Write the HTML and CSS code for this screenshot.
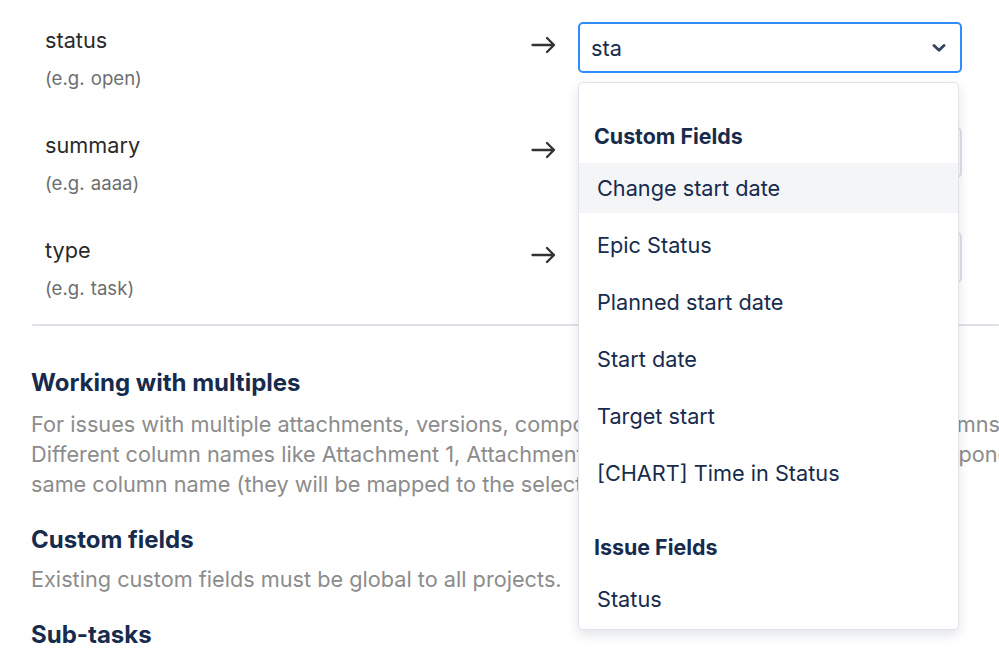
FILE: index.html
```html
<!DOCTYPE html>
<html lang="en">
<head>
<meta charset="utf-8">
<title>Field mapping</title>
<link rel="stylesheet" href="styles.css">
</head>
<body>
<div class="page">
  <div class="mapping">
    <div class="map-row">
      <div class="source">
        <div class="source-name">status</div>
        <div class="source-hint">(e.g. open)</div>
      </div>
      <div class="arrow">
        <svg width="26" height="20" viewBox="0 0 26 20"><path d="M1.5 10H23M16 3L23 10L16 17" fill="none" stroke="#333" stroke-width="2.3" stroke-linecap="round" stroke-linejoin="round"/></svg>
      </div>
      <div class="select-wrap">
        <div class="select select-focused">
          <span class="select-value">sta</span>
          <svg class="chevron" width="14" height="10" viewBox="0 0 14 10"><path d="M2 2.5L7 7.2L12 2.5" fill="none" stroke="#344563" stroke-width="2.9" stroke-linecap="round" stroke-linejoin="round"/></svg>
        </div>
        <div class="menu">
          <div class="group">
            <div class="group-heading">Custom Fields</div>
            <div class="options">
              <div class="option option-active">Change start date</div>
              <div class="option">Epic Status</div>
              <div class="option">Planned start date</div>
              <div class="option">Start date</div>
              <div class="option">Target start</div>
              <div class="option">[CHART] Time in Status</div>
            </div>
          </div>
          <div class="group">
            <div class="group-heading">Issue Fields</div>
            <div class="options">
              <div class="option">Status</div>
            </div>
          </div>
        </div>
      </div>
    </div>
    <div class="map-row">
      <div class="source">
        <div class="source-name">summary</div>
        <div class="source-hint">(e.g. aaaa)</div>
      </div>
      <div class="arrow">
        <svg width="26" height="20" viewBox="0 0 26 20"><path d="M1.5 10H23M16 3L23 10L16 17" fill="none" stroke="#333" stroke-width="2.3" stroke-linecap="round" stroke-linejoin="round"/></svg>
      </div>
      <div class="select-wrap">
        <div class="select"></div>
      </div>
    </div>
    <div class="map-row">
      <div class="source">
        <div class="source-name">type</div>
        <div class="source-hint">(e.g. task)</div>
      </div>
      <div class="arrow">
        <svg width="26" height="20" viewBox="0 0 26 20"><path d="M1.5 10H23M16 3L23 10L16 17" fill="none" stroke="#333" stroke-width="2.3" stroke-linecap="round" stroke-linejoin="round"/></svg>
      </div>
      <div class="select-wrap">
        <div class="select"></div>
      </div>
    </div>
  </div>

  <hr class="divider">

  <div class="info">
    <h3 class="info-title">Working with multiples</h3>
    <p class="info-text">For issues with multiple attachments, versions, components and sprints, use separate columns.<br>Different column names like Attachment 1, Attachment 2, Attachment 3, Component 1, Components 2<br>same column name (they will be mapped to the selected field as multiple values).</p>
    <h3 class="info-title">Custom fields</h3>
    <p class="info-text info-text-last">Existing custom fields must be global to all projects.</p>
    <h3 class="info-title">Sub-tasks</h3>
  </div>
</div>
</body>
</html>
```

FILE: styles.css
```css
html, body {
  margin: 0;
  padding: 0;
  background: #ffffff;
  overflow: hidden;
}

body {
  font-family: "Inter", "Noto Sans", "Liberation Sans", sans-serif;
  width: 999px;
  height: 651px;
}

.page {
  width: 999px;
  height: 651px;
  overflow: hidden;
  box-sizing: border-box;
  padding: 22px 0 0 31px;
}

.mapping {
  margin-left: 14px;
  width: 917px;
  display: flex;
  flex-direction: column;
  gap: 37px;
}

.map-row {
  display: flex;
  align-items: flex-start;
}

.source {
  flex: 1;
}

.source-name {
  margin-top: 6px;
  font-size: 21.7px;
  line-height: 24px;
  color: #2a2a2a;
}

.source-hint {
  margin-top: 14px;
  font-size: 18.6px;
  line-height: 24px;
  color: #6e6e6e;
  word-spacing: 1px;
}

.arrow {
  width: 47px;
  padding-top: 13px;
}

.arrow svg {
  display: block;
}

.select-wrap {
  position: relative;
  width: 384px;
}

.select {
  box-sizing: border-box;
  height: 51px;
  border: 2px solid #dfe1e6;
  background: #fafbfc;
  border-radius: 5px;
  display: flex;
  align-items: center;
  padding: 0 14px 0 11px;
}

.select-focused {
  border-color: #2f8cff;
  background: #ffffff;
}

.select-value {
  flex: 1;
  font-size: 21.7px;
  color: #172b4d;
}

.chevron {
  display: block;
}

.menu {
  position: absolute;
  z-index: 10;
  top: 60px;
  left: 0;
  width: 381px;
  box-sizing: border-box;
  background: #ffffff;
  border: 1px solid #e1e3e8;
  border-radius: 5px;
  box-shadow: 0 5px 12px rgba(9, 30, 66, 0.12);
  padding: 4px 0 5px;
}

.group {
  padding-top: 34px;
}

.group + .group {
  padding-top: 34px;
}

.group-heading {
  padding-left: 15px;
  height: 30px;
  line-height: 30px;
  font-size: 21.4px;
  font-weight: 700;
  color: #172b4d;
  margin-bottom: 12px;
}

.options {
  display: flex;
  flex-direction: column;
  gap: 7px;
}

.option {
  height: 50px;
  line-height: 50px;
  padding-left: 18px;
  font-size: 21.7px;
  color: #172b4d;
}

.option-active {
  background: #f4f5f7;
}

.divider {
  margin: 24px 0 0 1px;
  width: 967px;
  height: 2px;
  border: 0;
  background: #dfe1e6;
  border-radius: 1px;
}

.info {
  padding-top: 42px;
}

.info-title {
  margin: 0;
  font-size: 24px;
  line-height: 30px;
  font-weight: 700;
  color: #172b4d;
}

.info-text {
  margin: 11px 0 26px;
  font-size: 21.7px;
  line-height: 30px;
  color: #8c8c8c;
  white-space: nowrap;
}

.info-text-last {
  margin: 9px 0 26px;
}
```
